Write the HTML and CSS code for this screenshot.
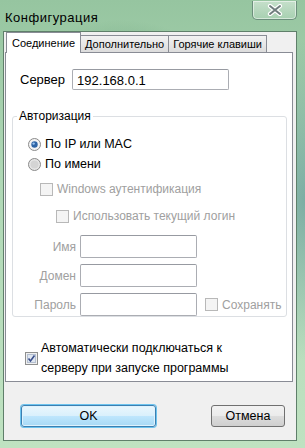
FILE: index.html
```html
<!DOCTYPE html>
<html lang="ru">
<head>
    <meta charset="UTF-8">
    <meta name="viewport" content="width=device-width, initial-scale=1.0">
    <title>Конфигурация</title>
    <link rel="stylesheet" href="styles.css">
</head>
<body>
<div class="window">
    <div class="titlebar">
        <span class="title">Конфигурация</span>
        <div class="close">
            <svg width="16" height="12" viewBox="0 0 16 12">
                <path d="M3 2 L13 10 M13 2 L3 10" stroke="#ffffff" stroke-width="4.2" stroke-linecap="round"/>
                <path d="M3 2 L13 10 M13 2 L3 10" stroke="#6f7d7d" stroke-width="2" stroke-linecap="round"/>
            </svg>
        </div>
    </div>

    <div class="client">
        <div class="tabs">
            <div class="tab active">Соединение</div>
            <div class="tab">Дополнительно</div>
            <div class="tab">Горячие клавиши</div>
        </div>

        <div class="panel">
            <div class="server-row">
                <span>Сервер</span>
                <div class="input server-input">192.168.0.1</div>
            </div>

            <fieldset class="group">
                <legend>Авторизация</legend>

                <div class="option radio-row">
                    <svg width="13" height="13" viewBox="0 0 13 13">
                        <circle cx="6.5" cy="6.5" r="6" fill="#f3f3f3" stroke="#8a8a8a"/>
                        <circle cx="6.5" cy="6.5" r="3.2" fill="#2e64a6"/>
                        <circle cx="5.6" cy="5.6" r="1.2" fill="#9cc4ee"/>
                    </svg>
                    <span>По IP или MAC</span>
                </div>
                <div class="option radio-row">
                    <svg width="13" height="13" viewBox="0 0 13 13">
                        <circle cx="6.5" cy="6.5" r="6" fill="#e6e6e6" stroke="#8a8a8a"/>
                        <circle cx="6.5" cy="6.5" r="4" fill="#d4d4d4"/>
                    </svg>
                    <span>По имени</span>
                </div>

                <div class="option check-row disabled level1">
                    <span class="box"></span>
                    <span>Windows аутентификация</span>
                </div>
                <div class="option check-row disabled level2">
                    <span class="box"></span>
                    <span>Использовать текущий логин</span>
                </div>

                <div class="fields">
                    <label>Имя</label>
                    <div class="input field"></div>
                    <span></span>

                    <label>Домен</label>
                    <div class="input field"></div>
                    <span></span>

                    <label>Пароль</label>
                    <div class="input field"></div>
                    <div class="option check-row disabled save">
                        <span class="box"></span>
                        <span>Сохранять</span>
                    </div>
                </div>
            </fieldset>

            <div class="autoconnect">
                <svg width="13" height="13" viewBox="0 0 13 13">
                    <rect x="0.5" y="0.5" width="12" height="12" fill="#f0f0f0" stroke="#8e8f8f"/>
                    <rect x="2.5" y="2.5" width="8" height="8" fill="#dfe6f0" stroke="#b4bfd0"/>
                    <path d="M3.5 6.5 L5.5 9 L9.5 3.5" fill="none" stroke="#3a4f8c" stroke-width="1.6"/>
                </svg>
                <span class="auto-text">Автоматически подключаться к серверу при запуске программы</span>
            </div>
        </div>

        <div class="buttons">
            <div class="button default">OK</div>
            <div class="button">Отмена</div>
        </div>
    </div>
</div>
</body>
</html>
```

FILE: styles.css
```css
html, body {
    width: 100%;
    height: 100%;
}

body {
    margin: 0;
    padding: 0;
    font-family: "Liberation Sans", Arial, sans-serif;
    font-size: 12px;
    color: #000;
    overflow: hidden;
}

.window {
    width: 305px;
    height: 448px;
    box-sizing: border-box;
    padding: 0 8px 7px 3px;
    display: flex;
    flex-direction: column;
    background:
        radial-gradient(ellipse 80px 40px at 120px 60px, rgba(80, 140, 100, 0.35), transparent),
        radial-gradient(ellipse 60px 160px at 305px 200px, rgba(60, 120, 140, 0.45), transparent),
        linear-gradient(180deg, #96c5a0 0%, #b0d8b6 40%, #bfe2c1 100%);
}

.titlebar {
    height: 31px;
    display: flex;
    align-items: flex-start;
    flex-shrink: 0;
}

.title {
    margin: 10px 0 0 2px;
    font-size: 13px;
    letter-spacing: 0.5px;
    color: #000;
}

.close {
    margin: 1px 0 0 auto;
    width: 45px;
    height: 19px;
    box-sizing: border-box;
    border: 1px solid #6c8f7c;
    border-top: none;
    border-radius: 0 0 5px 5px;
    background: linear-gradient(180deg, rgba(255,255,255,0.45), rgba(200,230,210,0.3));
    display: flex;
    align-items: center;
    justify-content: center;
    box-shadow: inset 0 0 0 1px rgba(255,255,255,0.5);
}

.client {
    flex: 1;
    background: #f0f0f0;
    border: 1px solid #5f7f6a;
    display: flex;
    flex-direction: column;
    padding: 0 3px 0 1px;
}

.tabs {
    display: flex;
    align-items: flex-end;
    padding-left: 2px;
    height: 20px;
}

.tab {
    height: 17px;
    box-sizing: border-box;
    padding: 2px 4px 0 4px;
    border: 1px solid #898c95;
    border-bottom: none;
    margin-left: -1px;
    background: linear-gradient(180deg, #f2f2f2, #dcdcdc);
    white-space: nowrap;
    font-size: 11px;
}

.tab.active {
    padding: 4px 5px 0 5px;
    background: #fff;
    position: relative;
    z-index: 1;
    margin-bottom: -1px;
    height: 21px;
}

.panel {
    height: 330px;
    box-sizing: border-box;
    background: #fff;
    border: 1px solid #898c95;
    padding: 16px 5px 0 6px;
}

.server-row {
    display: flex;
    align-items: center;
    padding-left: 8px;
    gap: 7px;
}

.server-row span {
    font-size: 13px;
}

.input {
    box-sizing: border-box;
    border: 1px solid #abadb3;
    border-top-color: #979aa1;
    border-radius: 2px;
    background: #fff;
}

.server-input {
    width: 157px;
    height: 21px;
    padding: 3px 0 0 4px;
    font-size: 13px;
}

.group {
    margin: 19px 0 0 0;
    padding: 0 0 7px 0;
    border: 1px solid #dcdfe3;
    border-radius: 3px;
    height: 208px;
    box-sizing: border-box;
}

.group legend {
    padding: 0 2px;
    margin-left: 4px;
}

.option {
    display: flex;
    align-items: center;
    gap: 4px;
    height: 20px;
}

.radio-row {
    margin-left: 15px;
}

.radio-row:first-of-type {
    margin-top: 11px;
}

.radio-row span {
    font-size: 12.5px;
}

.check-row .box {
    width: 11px;
    height: 11px;
    border: 1px solid #b8b8b8;
    background: #f4f4f4;
    flex-shrink: 0;
}

.disabled {
    color: #a0a0a0;
}

.level1 {
    margin-top: 5px;
    margin-left: 27px;
}

.level2 {
    margin-top: 7px;
    margin-left: 43px;
}

.fields {
    display: grid;
    grid-template-columns: 63px 117px auto;
    column-gap: 4px;
    row-gap: 6px;
    align-items: center;
    margin-top: 9px;
}

.fields label {
    color: #a0a0a0;
    text-align: right;
}

.field {
    height: 23px;
}

.save {
    margin-left: 4px;
}

.autoconnect {
    display: flex;
    align-items: center;
    gap: 3px;
    margin: 21px 0 0 13px;
}

.auto-text {
    width: 200px;
    font-size: 12.5px;
    line-height: 20px;
}

.buttons {
    flex: 1;
    display: flex;
    align-items: flex-start;
    justify-content: space-between;
    padding: 23px 8px 0 16px;
}

.button {
    height: 22px;
    box-sizing: border-box;
    border: 1px solid #707070;
    border-radius: 3px;
    background: linear-gradient(180deg, #f2f2f2 0%, #ebebeb 50%, #dddddd 51%, #cfcfcf 100%);
    display: flex;
    align-items: center;
    justify-content: center;
    width: 74px;
    font-size: 12.5px;
}

.button.default {
    width: 135px;
    border-color: #3c7fb1;
    background: linear-gradient(180deg, #eaf6fd 0%, #d9f0fc 50%, #bee6fd 51%, #a7d9f5 100%);
    box-shadow: 0 0 0 1px #6cc3ee, inset 0 0 0 1px #dff2fc;
}
```
